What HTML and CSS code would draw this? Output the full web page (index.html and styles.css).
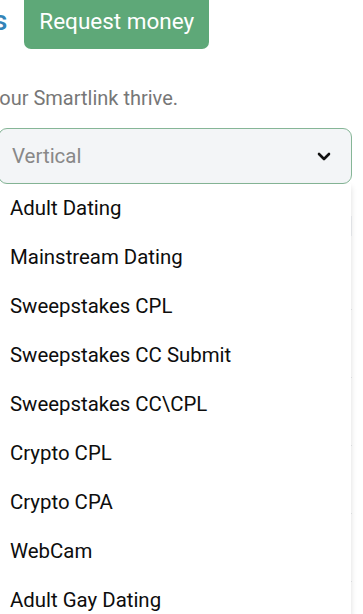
FILE: index.html
```html
<!DOCTYPE html>
<html lang="en">
<head>
  <meta charset="UTF-8">
  <meta name="viewport" content="width=device-width, initial-scale=1.0">
  <title>Smartlink</title>
  <link rel="stylesheet" href="styles.css">
</head>
<body>
  <main class="content">
    <div class="top">
      <h1 class="title">Payouts</h1>
      <button class="request-btn">Request money</button>
    </div>
    <p class="subtitle">Help your Smartlink thrive.</p>

    <div class="field">
      <div class="select">
        <span class="placeholder">Vertical</span>
        <svg class="chevron" width="14" height="9" viewBox="0 0 14 9">
          <path d="M2 2 L7 7 L12 2" fill="none" stroke="#111" stroke-width="2.6" stroke-linecap="round" stroke-linejoin="round"/>
        </svg>
      </div>

      <ul class="menu">
        <li>Adult Dating</li>
        <li>Mainstream Dating</li>
        <li>Sweepstakes CPL</li>
        <li>Sweepstakes CC Submit</li>
        <li>Sweepstakes CC\CPL</li>
        <li>Crypto CPL</li>
        <li>Crypto CPA</li>
        <li>WebCam</li>
        <li>Adult Gay Dating</li>
      </ul>

      <div class="table">
        <div class="table-head"></div>
        <div class="table-row first"></div>
        <div class="table-row"></div>
        <div class="table-row"></div>
        <div class="table-row"></div>
        <div class="table-row"></div>
      </div>
    </div>
  </main>
</body>
</html>
```

FILE: styles.css
```css
body {
  margin: 0;
  font-family: Roboto, "Liberation Sans", sans-serif;
  background-color: #fff;
  overflow: hidden;
  width: 363px;
  height: 614px;
}
.content {
  margin-left: -2px;
  padding-right: 11px;
}
.top {
  display: flex;
  align-items: center;
  gap: 17px;
  margin-top: -8px;
}
.title {
  margin: 0 0 0 -92px;
  font-size: 28px;
  font-weight: 500;
  color: #3384b8;
  white-space: nowrap;
}
.request-btn {
  background-color: #5ea878;
  color: #fff;
  border: none;
  border-radius: 7px;
  font-family: inherit;
  font-size: 22.5px;
  padding: 0 15px;
  height: 57px;
}
.subtitle {
  margin: 37px 0 0 -54px;
  font-size: 20px;
  color: #777;
  white-space: nowrap;
}
.field {
  position: relative;
  margin-top: 18px;
}
.select {
  display: flex;
  align-items: center;
  justify-content: space-between;
  height: 54px;
  padding: 0 20px 0 13px;
  background-color: #f3f5f7;
  border: 1px solid #86b697;
  border-radius: 9px;
}
.placeholder {
  font-size: 20.5px;
  color: #888;
}
.menu {
  position: absolute;
  top: 56px;
  left: 0;
  width: 353px;
  margin: 0;
  padding: 0;
  list-style: none;
  background-color: #fff;
  box-shadow: 0 3px 6px rgba(0, 0, 0, 0.14);
  z-index: 2;
}
.menu li {
  height: 49px;
  line-height: 49px;
  padding-left: 12px;
  font-size: 20.4px;
  color: #0d0d0d;
}
.table {
  margin-top: 32px;
}
.table-head {
  height: 20px;
  background-color: #eef1f4;
}
.table-row {
  height: 67px;
  border-bottom: 1px solid #e6e8ea;
}
.table-row.first {
  height: 73px;
}
```
